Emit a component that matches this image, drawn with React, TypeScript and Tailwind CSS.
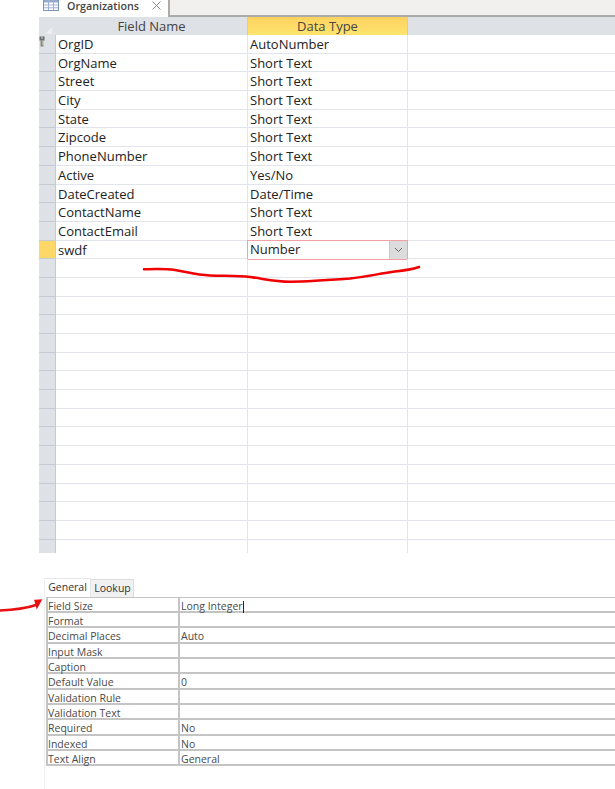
import React from 'react';

const fields = [
  ['OrgID', 'AutoNumber'],
  ['OrgName', 'Short Text'],
  ['Street', 'Short Text'],
  ['City', 'Short Text'],
  ['State', 'Short Text'],
  ['Zipcode', 'Short Text'],
  ['PhoneNumber', 'Short Text'],
  ['Active', 'Yes/No'],
  ['DateCreated', 'Date/Time'],
  ['ContactName', 'Short Text'],
  ['ContactEmail', 'Short Text'],
];

const props = [
  ['Field Size', 'Long Integer'],
  ['Format', ''],
  ['Decimal Places', 'Auto'],
  ['Input Mask', ''],
  ['Caption', ''],
  ['Default Value', '0'],
  ['Validation Rule', ''],
  ['Validation Text', ''],
  ['Required', 'No'],
  ['Indexed', 'No'],
  ['Text Align', 'General'],
];

const EMPTY_ROWS = 15;

const TableIcon = () => (
  <svg width="16" height="11" viewBox="0 0 16 11" className="block">
    <rect x="0.5" y="-0.5" width="15" height="11" fill="#fff" stroke="#7e93b8" />
    <rect x="1" y="0" width="14" height="2.5" fill="#93a9cd" />
    <path d="M5.5 0v10M10.5 0v10M1 5h14M1 7.800h14" stroke="#9db1d2" strokeWidth="1" fill="none" />
  </svg>
);

const KeyIcon = () => (
  <svg width="6" height="11" viewBox="0 0 6 11" className="block">
    <rect x="0.5" y="0.5" width="5" height="4" fill="#6b6b6b" />
    <rect x="2" y="1.500" width="2" height="1" fill="#d8d8d8" />
    <rect x="1.500" y="4.500" width="3" height="6" fill="#8c8c7a" />
    <path d="M3 6h2M3 8h2" stroke="#e6e6d8" strokeWidth="0.8" />
  </svg>
);

export default function App() {
  return (
    <div
      className="relative w-[615px] h-[789px] overflow-hidden bg-white text-[#262626]"
      style={{ fontFamily: '"Open Sans", "Noto Sans", sans-serif' }}
    >
      <div className="ml-[39px]">
        {/* tab strip */}
        <div className="flex h-[17px]">
          <div className="flex w-[129px] items-start bg-white pl-[4px]">
            <TableIcon />
            <span className="ml-[8px] text-[10.7px] leading-[12px] font-semibold text-[#444]">Organizations</span>
            <svg width="9" height="9" viewBox="0 0 9 9" className="ml-[13px] mt-[1px]">
              <path d="M0.5 0.500l8 8M8.500 0.500l-8 8" stroke="#8a8a8a" strokeWidth="1" fill="none" />
            </svg>
          </div>
          <div className="flex-1 border-l-[2px] border-b-[2px] border-[#ababab] bg-[#f1f0ee]" />
        </div>

        {/* header */}
        <div className="flex h-[18px] bg-[#dee1e6] text-[13px] leading-[19px] text-[#444]">
          <div className="relative w-[17px]">
            <div className="absolute left-[6px] top-[10px] h-0 w-0 border-b-[7px] border-l-[7px] border-b-[#eceef1] border-l-transparent" />
          </div>
          <div className="w-[191px] text-center">Field Name</div>
          <div className="w-[161px] border-x border-[#c9ccd3] bg-gradient-to-b from-[#fdd25f] to-[#fee46e] text-center">
            Data Type
          </div>
        </div>

        {/* design grid */}
        <div className="text-[13px] text-[#222]">
          {fields.map(([name, type], i) => (
            <div key={name} className="flex h-[18.7px] leading-[19.5px]">
              <div className="flex w-[17px] items-start border-r border-b border-[#c6cad2] bg-[#dee1e6] pt-[1px]">
                {i === 0 && <KeyIcon />}
              </div>
              <div className="w-[191px] border-b border-[#e2e4ec] pl-[2px]">{name}</div>
              <div className="w-[161px] border-x border-b border-[#e2e4ec] pl-[2px]">{type}</div>
              <div className="flex-1 border-b border-[#e2e4ec]" />
            </div>
          ))}
          <div className="flex h-[18.7px] leading-[19.5px]">
            <div className="w-[17px] border-r border-b border-[#c6cad2] bg-[#fdd867]" />
            <div className="w-[191px] border-b border-[#e2e4ec] pl-[2px]">swdf</div>
            <div className="-mt-px flex h-[20px] w-[161px] items-center justify-between border border-[#f2a0a6] pl-[2px]">
              <span className="pt-px">Number</span>
              <span className="flex h-full w-[18px] items-center justify-center border-l border-[#c8c8c8] bg-[#dcdcdc]">
                <svg width="9" height="6" viewBox="0 0 9 6">
                  <path d="M1 1l3.500 3.500L8 1" fill="none" stroke="#666" strokeWidth="1" />
                </svg>
              </span>
            </div>
            <div className="flex-1 border-b border-[#e2e4ec]" />
          </div>
          {Array.from({ length: EMPTY_ROWS }).map((_, i) => (
            <div key={i} className="flex h-[18.7px]">
              <div className="w-[17px] border-r border-b border-[#c6cad2] bg-[#dee1e6]" />
              <div className="w-[191px] border-b border-[#e2e4ec]" />
              <div className="w-[161px] border-x border-b border-[#e2e4ec]" />
              <div className="flex-1 border-b border-[#e2e4ec]" />
            </div>
          ))}
          {/* partly visible last row */}
          <div className="flex h-[13px]">
            <div className="w-[17px] border-r border-[#c6cad2] bg-[#dee1e6]" />
            <div className="w-[191px]" />
            <div className="w-[161px] border-x border-[#e2e4ec]" />
          </div>
        </div>
      </div>

      {/* field properties */}
      <div className="mt-[25px] ml-[44px] h-[211px] border-l border-[#eeeeee]">
        <div className="flex h-[19px] items-end text-[10.5px] text-[#333]">
          <div className="flex h-[19px] w-[46px] items-center justify-center border-t border-r border-[#e6e6e6] bg-white">General</div>
          <div className="flex h-[18px] w-[43px] items-center justify-center border-t border-r border-[#dcdcdc] bg-[#f1f1f1] pt-[2px] pl-px">Lookup</div>
        </div>
        <div className="ml-[1px] border-t border-l-2 border-[#c4c4c4] text-[10.5px] text-[#4a4a4a]">
          {props.map(([label, value]) => (
            <div key={label} className="flex h-[15.35px] border-b-2 border-[#c4c4c4] leading-[16px]">
              <div className="w-[132px] border-r-2 border-[#c4c4c4]">{label}</div>
              <div className="flex-1 pl-[1px]">
                {value}
                {label === 'Field Size' && <span className="inline-block h-[12px] w-px bg-[#222] align-middle" />}
              </div>
            </div>
          ))}
        </div>
      </div>

      {/* red marker annotations */}
      <svg className="absolute left-0 top-0 pointer-events-none" width="615" height="789" viewBox="0 0 615 789" fill="none">
        <path
          d="M144 269.300C155 269 165 268.500 175 270C188 272 195 275 210 275.500C225 276 240 276 250 277C265 279 275 281.700 290 281.700C310 281.500 330 280 350 278.500C365 277 380 273.500 395 271.500C405 270.500 413 269 419 267"
          stroke="#f00000"
          strokeWidth="2.500"
          strokeLinecap="round"
        />
        <path d="M0 610.500C12 610 24 609 36 605" stroke="#e81010" strokeWidth="2.500" strokeLinecap="round" />
        <path d="M35 600.500L41 600L37 607.500Z" fill="#e81010" stroke="#e81010" strokeWidth="1.500" />
      </svg>
    </div>
  );
}
